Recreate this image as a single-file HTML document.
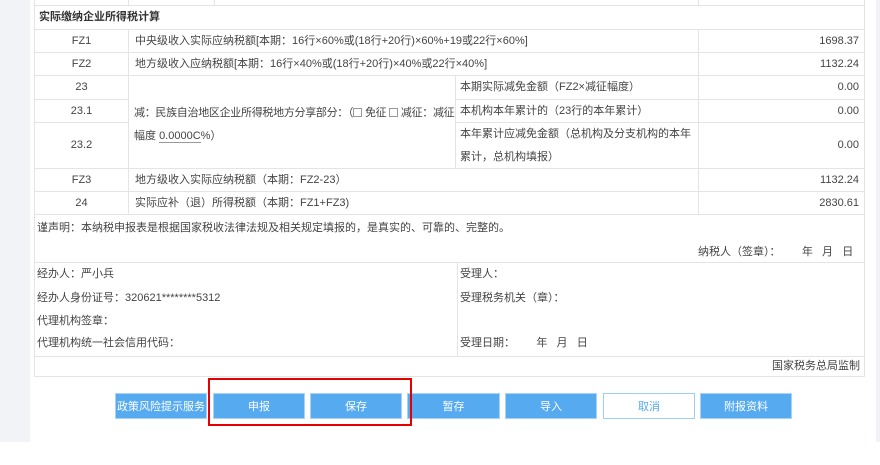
<!DOCTYPE html>
<html><head><meta charset="utf-8"><style>
*{margin:0;padding:0;box-sizing:border-box}
body{width:880px;height:465px;position:relative;background:#fff;font-family:"Liberation Sans","Noto Sans CJK SC",sans-serif;font-size:11px;color:#444;overflow:hidden}
.g{position:absolute;background:#f2f3f7}
.c{position:absolute;border:1px solid #e4e4e4;background:#fff;white-space:nowrap;line-height:22px;overflow:hidden}
.t{position:absolute;white-space:nowrap;font-size:11px}
.btn{position:absolute;top:393px;height:26px;width:92px;background:#56aaf0;color:#fff;text-align:center;line-height:26px;font-size:11px;border:1px solid #a8d3f7}
</style></head><body>
<div class="g" style="left:0;top:0;width:30px;height:442px"></div>
<div class="g" style="left:876px;top:0;width:4px;height:442px"></div>

<div class="c" style="left:34px;top:-20px;width:95px;height:26px"></div>
<div class="c" style="left:128px;top:-20px;width:87px;height:26px"></div>
<div class="c" style="left:214px;top:-20px;width:485px;height:26px"></div>
<div class="c" style="left:698px;top:-20px;width:167px;height:26px"></div>

<div class="c" style="left:34px;top:5px;width:831px;height:25px;padding-left:4px;font-weight:bold;font-size:11px;color:#333">实际缴纳企业所得税计算</div>

<div class="c" style="left:34px;top:29px;width:95px;height:24px;text-align:center">FZ1</div>
<div class="c" style="left:128px;top:29px;width:571px;height:24px;padding-left:6px">中央级收入实际应纳税额[本期：16行×60%或(18行+20行)×60%+19或22行×60%]</div>
<div class="c" style="left:698px;top:29px;width:167px;height:24px;text-align:right;padding-right:5px">1698.37</div>

<div class="c" style="left:34px;top:52px;width:95px;height:24px;text-align:center">FZ2</div>
<div class="c" style="left:128px;top:52px;width:571px;height:24px;padding-left:6px">地方级收入应纳税额[本期：16行×40%或(18行+20行)×40%或22行×40%]</div>
<div class="c" style="left:698px;top:52px;width:167px;height:24px;text-align:right;padding-right:5px">1132.24</div>

<div class="c" style="left:34px;top:75px;width:95px;height:25px;text-align:center">23</div>
<div class="c" style="left:34px;top:99px;width:95px;height:24px;text-align:center">23.1</div>
<div class="c" style="left:34px;top:122px;width:95px;height:47px;text-align:center;line-height:45px">23.2</div>
<div class="c" style="left:128px;top:75px;width:328px;height:94px"></div>
<div class="t" style="left:134px;top:104px;letter-spacing:-0.3px">减：民族自治地区企业所得税地方分享部分：（<span style="display:inline-block;width:9px;height:9px;border:1px solid #999;vertical-align:-1px"></span> 免征 <span style="display:inline-block;width:9px;height:9px;border:1px solid #999;vertical-align:-1px"></span> 减征：减征</div>
<div class="t" style="left:134px;top:127px">幅度 <span style="border-bottom:1px solid #999">0.0000C</span>%）</div>
<div class="c" style="left:455px;top:75px;width:244px;height:25px;padding-left:4px">本期实际减免金额（FZ2×减征幅度）</div>
<div class="c" style="left:455px;top:99px;width:244px;height:24px;padding-left:4px">本机构本年累计的（23行的本年累计）</div>
<div class="c" style="left:455px;top:122px;width:244px;height:47px;padding-left:4px;line-height:23px;white-space:normal">本年累计应减免金额（总机构及分支机构的本年累计，总机构填报）</div>
<div class="c" style="left:698px;top:75px;width:167px;height:25px;text-align:right;padding-right:5px">0.00</div>
<div class="c" style="left:698px;top:99px;width:167px;height:24px;text-align:right;padding-right:5px">0.00</div>
<div class="c" style="left:698px;top:122px;width:167px;height:47px;text-align:right;padding-right:5px;line-height:45px">0.00</div>

<div class="c" style="left:34px;top:168px;width:95px;height:24px;text-align:center">FZ3</div>
<div class="c" style="left:128px;top:168px;width:571px;height:24px;padding-left:6px">地方级收入实际应纳税额（本期：FZ2-23）</div>
<div class="c" style="left:698px;top:168px;width:167px;height:24px;text-align:right;padding-right:5px">1132.24</div>

<div class="c" style="left:34px;top:191px;width:95px;height:24px;text-align:center">24</div>
<div class="c" style="left:128px;top:191px;width:571px;height:24px;padding-left:6px">实际应补（退）所得税额（本期：FZ1+FZ3)</div>
<div class="c" style="left:698px;top:191px;width:167px;height:24px;text-align:right;padding-right:5px">2830.61</div>

<div class="c" style="left:34px;top:214px;width:831px;height:49px"></div>
<div class="t" style="left:37px;top:219px">谨声明：本纳税申报表是根据国家税收法律法规及相关规定填报的，是真实的、可靠的、完整的。</div>
<div class="t" style="left:698px;top:243px">纳税人（签章）：&nbsp;&nbsp;&nbsp;&nbsp;&nbsp;&nbsp;&nbsp;年&nbsp;&nbsp;&nbsp;月&nbsp;&nbsp;&nbsp;日</div>

<div class="c" style="left:34px;top:262px;width:424px;height:95px"></div>
<div class="c" style="left:457px;top:262px;width:408px;height:95px"></div>
<div class="t" style="left:37px;top:265px">经办人：严小兵</div>
<div class="t" style="left:37px;top:289px">经办人身份证号：320621********5312</div>
<div class="t" style="left:37px;top:312px">代理机构签章：</div>
<div class="t" style="left:37px;top:334px">代理机构统一社会信用代码：</div>
<div class="t" style="left:460px;top:265px">受理人：</div>
<div class="t" style="left:460px;top:289px">受理税务机关（章）：</div>
<div class="t" style="left:460px;top:334px">受理日期：&nbsp;&nbsp;&nbsp;&nbsp;&nbsp;&nbsp;&nbsp;年&nbsp;&nbsp;&nbsp;月&nbsp;&nbsp;&nbsp;日</div>
<div class="c" style="left:34px;top:356px;width:831px;height:21px;line-height:19px;text-align:right;padding-right:4px">国家税务总局监制</div>

<div class="btn" style="left:115px;width:92px">政策风险提示服务</div>
<div class="btn" style="left:213px">申报</div>
<div class="btn" style="left:310px">保存</div>
<div class="btn" style="left:407px;width:93px">暂存</div>
<div class="btn" style="left:505px">导入</div>
<div class="btn" style="left:603px;background:#fff;color:#56aaf0;border-color:#9ccdf5">取消</div>
<div class="btn" style="left:700px">附报资料</div>

<div style="position:absolute;left:208px;top:378px;width:204px;height:48px;border:2px solid #e60000"></div>
</body></html>
